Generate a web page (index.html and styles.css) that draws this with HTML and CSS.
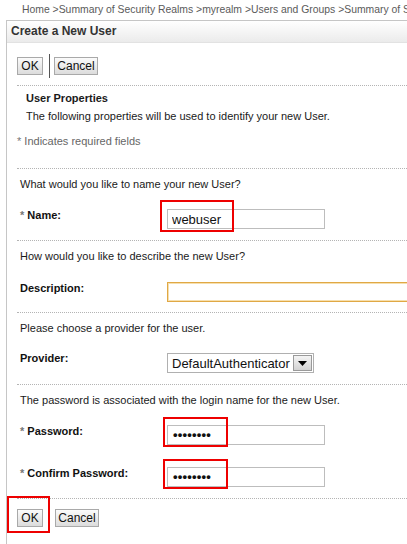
FILE: index.html
```html
<!DOCTYPE html>
<html>
<head>
<meta charset="utf-8">
<link rel="stylesheet" href="styles.css">
</head>
<body>
<div class="crumbs">Home &gt;Summary of Security Realms &gt;myrealm &gt;Users and Groups &gt;Summary of Sec</div>
<div class="panel">
  <div class="panel-head">Create a New User</div>
  <div class="panel-body">
    <div class="toolbar">
      <button class="btn btn-ok">OK</button>
      <span class="sep"></span>
      <button class="btn btn-cancel">Cancel</button>
    </div>
    <div class="section intro">
      <div class="sec-title">User Properties</div>
      <div class="sec-desc">The following properties will be used to identify your new User.</div>
      <div class="required"><span class="star">*</span> Indicates required fields</div>
    </div>
    <div class="section">
      <div class="question">What would you like to name your new User?</div>
      <div class="row row-name">
        <label class="label"><span class="star">*</span> Name:</label>
        <div class="field">
          <input class="input" type="text" value="webuser">
          <span class="mark mark-name"></span>
        </div>
      </div>
    </div>
    <div class="section">
      <div class="question">How would you like to describe the new User?</div>
      <div class="row row-desc">
        <label class="label">Description:</label>
        <div class="field">
          <input class="input input-desc" type="text" value="">
        </div>
      </div>
    </div>
    <div class="section">
      <div class="question">Please choose a provider for the user.</div>
      <div class="row row-prov">
        <label class="label">Provider:</label>
        <div class="field">
          <div class="select"><span class="select-text">DefaultAuthenticator</span><span class="select-btn"><svg width="9" height="5" viewBox="0 0 9 5"><path d="M0 0H9L4.5 5Z" fill="#000"/></svg></span></div>
        </div>
      </div>
    </div>
    <div class="section">
      <div class="question">The password is associated with the login name for the new User.</div>
      <div class="row row-pass">
        <label class="label"><span class="star">*</span> Password:</label>
        <div class="field">
          <div class="input dots">••••••••</div>
          <span class="mark mark-pass"></span>
        </div>
      </div>
      <div class="row row-confirm">
        <label class="label"><span class="star">*</span> Confirm Password:</label>
        <div class="field">
          <div class="input dots">••••••••</div>
          <span class="mark mark-pass"></span>
        </div>
      </div>
    </div>
    <div class="section footer">
      <div class="toolbar-bottom">
        <div class="field">
          <button class="btn btn-ok">OK</button>
          <span class="mark mark-ok"></span>
        </div>
        <button class="btn btn-cancel">Cancel</button>
      </div>
    </div>
  </div>
</div>
</body>
</html>
```

FILE: styles.css
```css
html, body {
  margin: 0;
  padding: 0;
  overflow: hidden;
  background: #fff;
}
body {
  width: 407px;
  height: 544px;
  font-family: "Liberation Sans", Arial, sans-serif;
  font-size: 11px;
  line-height: 13px;
  color: #1a1a1a;
}
.crumbs {
  box-sizing: border-box;
  height: 20px;
  padding: 3px 0 0 22px;
  font-size: 10.4px;
  color: #5a5a5a;
  white-space: nowrap;
  overflow: hidden;
}
.panel {
  margin-left: 6px;
  border-left: 1px solid #c6c6c6;
  border-top: 1px solid #c6c6c6;
  height: 530px;
}
.panel-head {
  box-sizing: border-box;
  height: 22px;
  display: flex;
  align-items: center;
  padding-left: 4px;
  font-size: 12px;
  font-weight: bold;
  color: #333;
  background: linear-gradient(#ffffff, #ebebeb);
  border-bottom: 1px solid #e2e2e2;
}
.panel-body {
  padding-left: 10px;
}
.toolbar {
  display: flex;
  align-items: center;
  height: 24px;
  margin-top: 11px;
  margin-bottom: 7px;
}
.btn {
  box-sizing: border-box;
  height: 18px;
  padding: 0;
  margin: 0;
  font-family: "Liberation Sans", Arial, sans-serif;
  font-size: 12px;
  line-height: 16px;
  color: #111;
  background: linear-gradient(#fbfbfb, #dcdcdc);
  border: 1px solid #a9a9a9;
  border-radius: 0;
}
.btn-ok { width: 26px; }
.btn-cancel { width: 44px; }
.sep {
  width: 1px;
  height: 24px;
  background: #555;
  margin: 0 4px 0 6px;
}
.section {
  border-top: 1px dotted #b4b4b4;
}
.intro {
  padding-top: 6px;
  height: 76px;
}
.sec-title {
  font-weight: bold;
  padding-left: 9px;
}
.sec-desc {
  padding-left: 9px;
  margin-top: 5px;
}
.required {
  margin-top: 12px;
  color: #666;
}
.star {
  color: #777;
}
.question {
  padding: 9px 0 0 3px;
}
.row {
  display: flex;
  align-items: flex-start;
  padding-left: 3px;
  margin-top: 18px;
  margin-bottom: 11px;
}
.row-desc { margin-top: 19px; margin-bottom: 10px; }
.row-prov { margin-top: 17px; margin-bottom: 11px; }
.row-pass { margin-bottom: 0; }
.row-confirm { margin-top: 22px; margin-bottom: 11px; }
.label {
  width: 147px;
  flex: none;
  font-weight: bold;
  color: #111;
}
.field {
  position: relative;
}
.input {
  box-sizing: border-box;
  display: block;
  width: 158px;
  height: 20px;
  margin: 0;
  padding: 0 0 0 4px;
  border: 1px solid #bdbdbd;
  background: #fff;
  font-family: "Liberation Sans", Arial, sans-serif;
  font-size: 13px;
  color: #111;
  outline: none;
}
.input-desc {
  width: 300px;
  border: 1px solid #e0a845;
  box-shadow: inset 0 0 0 1px #f6dfae;
}
.dots {
  line-height: 18px;
  padding-left: 5px;
  font-size: 13px;
  font-weight: bold;
  letter-spacing: 0.2px;
  color: #111;
}
.select {
  box-sizing: border-box;
  margin-top: 1px;
  width: 147px;
  height: 20px;
  border: 1px solid #b0b0b0;
  display: flex;
  align-items: center;
  justify-content: space-between;
  padding-left: 4px;
  background: #fff;
}
.select-text {
  font-size: 13px;
  color: #111;
}
.select-btn {
  box-sizing: border-box;
  width: 19px;
  height: 16px;
  margin-right: 1px;
  display: flex;
  align-items: center;
  justify-content: center;
  background: linear-gradient(#f4f4f4, #d2d2d2);
  border: 1px solid #9a9a9a;
}
.mark {
  position: absolute;
  box-sizing: border-box;
  border: 2px solid #ee0000;
  pointer-events: none;
}
.mark-name { left: -7px; top: -9px; width: 74px; height: 32px; }
.mark-pass { left: -4px; top: -8px; width: 65px; height: 30px; }
.mark-ok { left: -10px; top: -13px; width: 43px; height: 37px; }
.toolbar-bottom {
  display: flex;
  gap: 12px;
  padding-top: 10px;
}
.toolbar-bottom .field {
  display: flex;
}
```
